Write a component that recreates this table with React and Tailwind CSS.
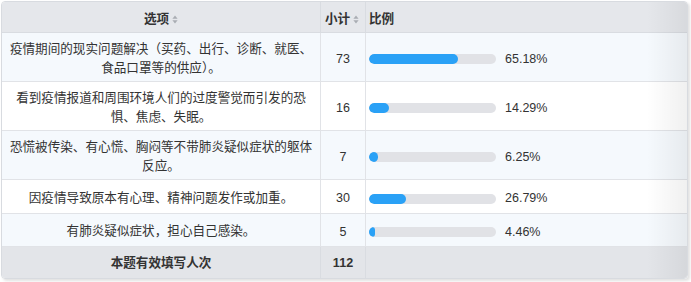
const rows = [
  { text: "疫情期间的现实问题解决（买药、出行、诊断、就医、食品口罩等的供应）。", count: 73, pct: 65.18, h: "h-[49px]", alt: true },
  { text: "看到疫情报道和周围环境人们的过度警觉而引发的恐惧、焦虑、失眠。", count: 16, pct: 14.29, h: "h-[49px]", alt: false },
  { text: "恐慌被传染、有心慌、胸闷等不带肺炎疑似症状的躯体反应。", count: 7, pct: 6.25, h: "h-[49px]", alt: true },
  { text: "因疫情导致原本有心理、精神问题发作或加重。", count: 30, pct: 26.79, h: "h-[34px]", alt: false },
  { text: "有肺炎疑似症状，担心自己感染。", count: 5, pct: 4.46, h: "h-[33px]", alt: true },
];

function SortIcon() {
  return (
    <svg width="6" height="9" viewBox="0 0 6 9" className="ml-[3px] mt-px">
      <path d="M3 0.5 L5.6 3.8 H0.4 Z" fill="#a9adb3" />
      <path d="M3 8.5 L5.6 5.2 H0.4 Z" fill="#a9adb3" />
    </svg>
  );
}

function Bar({ pct }) {
  return (
    <div className="flex items-center pt-1 pl-[3px]">
      <div className="w-[127px] h-[10px] rounded-full bg-[#e1e2e6] overflow-hidden">
        <div className="h-full rounded-full bg-[#2aa1f6]" style={{ width: `${pct * 1.37}px` }} />
      </div>
      <span className="ml-[9px] text-[12.5px] text-[#333]">{pct.toFixed(2)}%</span>
    </div>
  );
}

export default function App() {
  return (
    <div className="w-[691px] h-[282px] bg-white pt-px pl-px font-['Liberation_Sans','Noto_Sans_CJK_SC',sans-serif]">
      <div className="relative w-[687px] rounded-[4px] border border-[#d8dbe0] overflow-hidden shadow-[2px_2px_3px_rgba(0,0,0,0.12)] text-[#333]">
        <div className="flex h-[31px] bg-[#e5e7eb] border-b border-[#d9dce1] font-bold text-[12.6px]">
          <div className="w-[319px] border-r border-[#d9dce1] flex items-center justify-center pt-1">
            选项<SortIcon />
          </div>
          <div className="w-[45px] border-r border-[#d9dce1] flex items-center pl-[4px] pt-1">
            小计<SortIcon />
          </div>
          <div className="flex-1 flex items-center pl-[3px] pt-1">比例</div>
        </div>

        {rows.map((r) => (
          <div
            key={r.count}
            className={`flex ${r.h} border-b border-[#e1e3e7] ${r.alt ? "bg-[#f5f9fd]" : "bg-white"}`}
          >
            <div className="w-[319px] border-r border-[#e1e3e7] flex items-center justify-center px-[6px] pt-1 text-center text-[12.6px] leading-[19.5px]">
              {r.text}
            </div>
            <div className="w-[45px] border-r border-[#e1e3e7] flex items-center justify-center pt-1 text-[12.5px]">
              {r.count}
            </div>
            <div className="flex-1 flex items-center">
              <Bar pct={r.pct} />
            </div>
          </div>
        ))}

        <div className="flex h-[31px] bg-[#e3e5e9] font-bold text-[12.6px]">
          <div className="w-[319px] border-r border-[#d9dce1] flex items-center justify-center pt-[2px]">
            本题有效填写人次
          </div>
          <div className="w-[45px] border-r border-[#d9dce1] flex items-center justify-center pt-[2px]">
            112
          </div>
          <div className="flex-1" />
        </div>

        <div className="pointer-events-none absolute top-0 right-0 h-full w-[40px] bg-gradient-to-r from-transparent to-[rgba(0,0,0,0.06)]" />
      </div>
    </div>
  );
}
